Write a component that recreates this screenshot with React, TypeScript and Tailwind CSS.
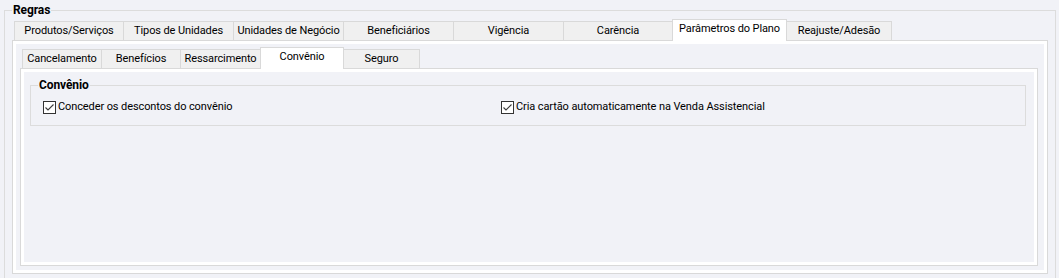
import React from "react";

const FONT = { fontFamily: 'Roboto, "Noto Sans", sans-serif' };

function Tab({
  label,
  w,
  selected,
  last,
}: {
  label: string;
  w: string;
  selected?: boolean;
  last?: boolean;
}) {
  if (selected) {
    return (
      <div
        className={`relative z-10 -mb-px h-[22px] shrink-0 overflow-hidden border-x border-t border-[#d9d9d9] bg-white pt-px text-center leading-[16px] whitespace-nowrap ${w}`}
      >
        {label}
      </div>
    );
  }
  return (
    <div
      className={`h-[19px] shrink-0 overflow-hidden border-l border-t border-[#d9d9d9] bg-[#f0f0f0] pt-px text-center leading-[16px] whitespace-nowrap ${w} ${
        last ? "border-r" : ""
      }`}
    >
      {label}
    </div>
  );
}

function Check({ label }: { label: string }) {
  return (
    <div className="flex items-center">
      <svg width="13" height="13" viewBox="0 0 13 13" className="shrink-0">
        <rect x="0.5" y="0.5" width="12" height="12" fill="#ffffff" stroke="#333333" />
        <path d="M2.5 6.5 L5 9 L10.5 3.5" fill="none" stroke="#3c3c3c" strokeWidth="1.1" />
      </svg>
      <span className="ml-[2px] leading-[16px] whitespace-nowrap">{label}</span>
    </div>
  );
}

export default function App() {
  return (
    <div
      style={FONT}
      className="h-[278px] w-[1059px] overflow-hidden bg-[#f1f2f7] pl-[4px] pt-[10px] text-[11px] tracking-[-0.1px] text-black"
    >
      {/* Group Regras */}
      <div className="relative h-[290px] w-[1052px] border-x border-t border-[#dcdcdc] pl-[7px] pt-[8px]">
        <span className="absolute -top-[9px] left-[7px] bg-[#f1f2f7] px-px text-[12px] font-bold leading-[16px]">
          Regras
        </span>

        {/* Outer tab control */}
        <div className="w-[1036px]">
          <div className="flex h-[21px] items-end pl-[2px]">
            <Tab label="Produtos/Serviços" w="w-[109px]" />
            <Tab label="Tipos de Unidades" w="w-[110px]" />
            <Tab label="Unidades de Negócio" w="w-[110px]" />
            <Tab label="Beneficiários" w="w-[110px]" />
            <Tab label="Vigência" w="w-[110px]" />
            <Tab label="Carência" w="w-[109px]" />
            <Tab label="Parâmetros do Plano" w="w-[115px]" selected />
            <div className="h-[19px] w-[105px] shrink-0 overflow-hidden border-r border-t border-[#d9d9d9] bg-[#f0f0f0] pt-px text-center leading-[16px] whitespace-nowrap">
              Reajuste/Adesão
            </div>
          </div>
          <div className="h-[234px] border border-[#d9d9d9] bg-white p-[3px]">
            <div className="h-full bg-[#f1f2f7] pl-[4px] pr-[6px] pt-[3px]">
              {/* Inner tab control */}
              <div className="w-[1018px]">
                <div className="flex h-[21px] items-end pl-[2px]">
                  <Tab label="Cancelamento" w="w-[79px]" />
                  <Tab label="Benefícios" w="w-[79px]" />
                  <Tab label="Ressarcimento" w="w-[80px]" />
                  <Tab label="Convênio" w="w-[84px]" selected />
                  <div className="h-[19px] w-[76px] shrink-0 overflow-hidden border-r border-t border-[#d9d9d9] bg-[#f0f0f0] pt-px text-center leading-[16px] whitespace-nowrap">
                    Seguro
                  </div>
                </div>
                <div className="h-[198px] border border-[#d9d9d9] bg-white p-[3px]">
                  <div className="h-full bg-[#f1f2f7] pl-[6px] pt-[13px]">
                    {/* Group Convênio */}
                    <div className="relative h-[41px] w-[996px] border border-[#dcdcdc] pl-[12px] pt-[13px]">
                      <span className="absolute -top-[9px] left-[7px] bg-[#f1f2f7] px-px text-[12px] font-bold leading-[16px]">
                        Convênio
                      </span>
                      <div className="grid grid-cols-[458px_1fr]">
                        <Check label="Conceder os descontos do convênio" />
                        <Check label="Cria cartão automaticamente na Venda Assistencial" />
                      </div>
                    </div>
                  </div>
                </div>
              </div>
            </div>
          </div>
        </div>
      </div>
    </div>
  );
}
